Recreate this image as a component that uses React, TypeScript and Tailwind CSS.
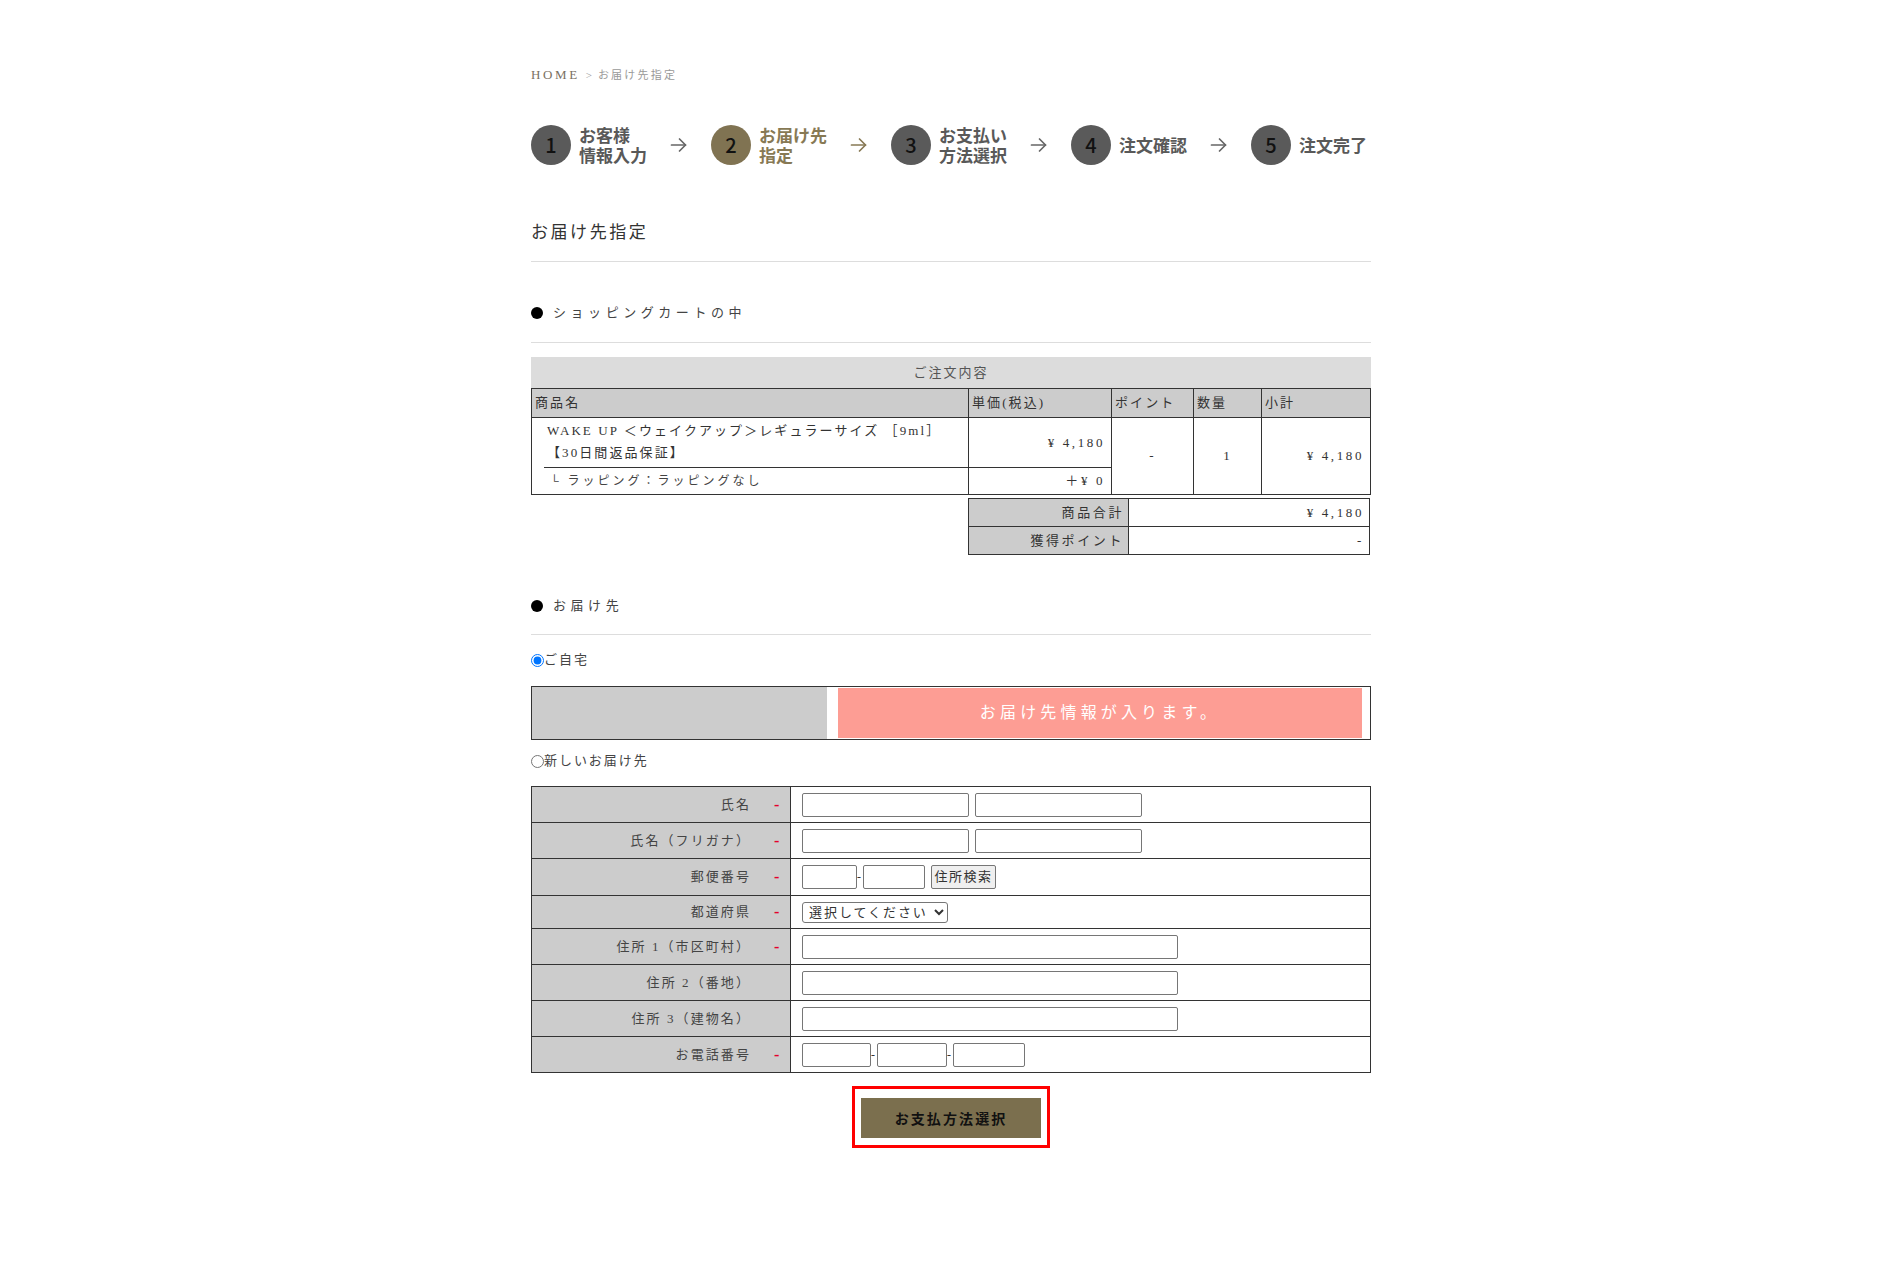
import type { ReactNode } from 'react';

const serif = "font-['Liberation_Serif','Noto_Sans_CJK_JP',serif]";
const sans = "font-['Noto_Sans_CJK_JP','Noto_Sans',sans-serif]";

type Step = Readonly<{ n: number; lines: string[]; active?: boolean }>;

const steps: Step[] = [
  { n: 1, lines: ['お客様', '情報入力'] },
  { n: 2, lines: ['お届け先', '指定'], active: true },
  { n: 3, lines: ['お支払い', '方法選択'] },
  { n: 4, lines: ['注文確認'] },
  { n: 5, lines: ['注文完了'] },
];

const Arrow = ({ color }: { color: string }) => (
  <svg width="17" height="16" viewBox="0 0 17 16" fill="none" stroke={color} strokeWidth="1.7" strokeLinecap="round" strokeLinejoin="round">
    <path d="M1.5 8h14" />
    <path d="M9.5 2l6 6-6 6" />
  </svg>
);

const StepBar = () => (
  <div className={`mt-[40px] grid grid-cols-[180px_180px_180px_180px_1fr] ${sans}`}>
    {steps.map((s, i) => (
      <div key={s.n} className="flex items-center">
        <div className="flex items-center gap-[8px]">
          <span
            className={
              s.active
                ? 'flex h-10 w-10 shrink-0 items-center justify-center rounded-full bg-[#807352] text-[20px] font-medium text-[#111]'
                : 'flex h-10 w-10 shrink-0 items-center justify-center rounded-full bg-[#5a5a5a] text-[20px] font-medium text-[#111]'
            }
          >
            {s.n}
          </span>
          <div
            className={
              s.active
                ? 'text-[17px] font-bold leading-[20px] whitespace-nowrap text-[#877954]'
                : 'text-[17px] font-bold leading-[20px] whitespace-nowrap text-[#595959]'
            }
          >
            {s.lines.map((l) => (
              <div key={l}>{l}</div>
            ))}
          </div>
        </div>
        {i < steps.length - 1 && (
          <div className="mr-[24px] ml-auto flex">
            <Arrow color={s.active ? '#877954' : '#666666'} />
          </div>
        )}
      </div>
    ))}
  </div>
);

const SectionHeading = ({ children, className }: { children: ReactNode; className: string }) => (
  <div className={`flex items-center border-b border-[#dddddd] leading-[20px] ${className}`}>
    <span className="inline-block h-[12px] w-[12px] rounded-full bg-black" />
    <span className="ml-[10px] text-[13px] tracking-[0.35em] text-[#444]">{children}</span>
  </div>
);

const OrderTable = () => (
  <>
    <div className="mt-[14px] flex h-[31px] items-center justify-center bg-[#dcdcdc] text-[13px] tracking-[0.15em] text-[#555]">
      ご注文内容
    </div>
    <table className="w-full table-fixed border-collapse text-[13px] tracking-[0.16em] text-[#333]">
      <colgroup>
        <col className="w-[437px]" />
        <col className="w-[143px]" />
        <col className="w-[82px]" />
        <col className="w-[68px]" />
        <col />
      </colgroup>
      <thead>
        <tr className="h-[29px] bg-[#cccccc]">
          <th className="border border-[#333] px-[3px] text-left font-normal">商品名</th>
          <th className="border border-[#333] px-[3px] text-left font-normal">単価(税込)</th>
          <th className="border border-[#333] px-[3px] text-left font-normal">ポイント</th>
          <th className="border border-[#333] px-[3px] text-left font-normal">数量</th>
          <th className="border border-[#333] px-[3px] text-left font-normal">小計</th>
        </tr>
      </thead>
      <tbody>
        <tr className="h-[49px]">
          <td className="border-l border-[#333] pt-[2px] pb-[3px] pl-[15px] align-top leading-[22px]">
            <div className="whitespace-nowrap">WAKE UP ＜ウェイクアップ＞レギュラーサイズ ［9ml］</div>
            <div>【30日間返品保証】</div>
          </td>
          <td className="border border-[#333] pr-[6px] text-right align-middle tracking-[0.2em]">¥ 4,180</td>
          <td rowSpan={2} className="border border-[#333] text-center align-middle">-</td>
          <td rowSpan={2} className="border border-[#333] text-center align-middle">1</td>
          <td rowSpan={2} className="border border-[#333] pr-[6px] text-right align-middle tracking-[0.2em]">
            ¥ 4,180
          </td>
        </tr>
        <tr className="h-[27px]">
          <td className="border-b border-l border-[#333] p-0 pl-[12px]">
            <div className="flex h-[27px] items-center border-t border-[#333] pl-[6px] text-[12px] tracking-[0.25em] text-[#444]">
              └ ラッピング：ラッピングなし
            </div>
          </td>
          <td className="border border-[#333] pr-[6px] text-right align-middle tracking-[0.2em]">＋¥ 0</td>
        </tr>
      </tbody>
    </table>
    <table className="mt-[3px] mr-[1px] ml-auto w-[402px] table-fixed border-collapse text-[13px] tracking-[0.2em] text-[#333]">
      <colgroup>
        <col className="w-[160px]" />
        <col />
      </colgroup>
      <tbody>
        <tr className="h-[28px]">
          <th className="border border-[#333] bg-[#cccccc] pr-[4px] text-right font-normal">商品合計</th>
          <td className="border border-[#333] pr-[5px] text-right">¥ 4,180</td>
        </tr>
        <tr className="h-[28px]">
          <th className="border border-[#333] bg-[#cccccc] pr-[4px] text-right font-normal">獲得ポイント</th>
          <td className="border border-[#333] pr-[5px] text-right">-</td>
        </tr>
      </tbody>
    </table>
  </>
);

const inputCls = 'h-[24px] rounded-[2px] border border-[#767676] bg-white';
const Dash = () => <span className="w-[6px] text-center text-[12px] leading-none text-[#333]">-</span>;

type Row = Readonly<{ label: string; req: boolean; kind: 'name' | 'zip' | 'pref' | 'addr' | 'tel'; h: string }>;

const rows: Row[] = [
  { label: '氏名', req: true, kind: 'name', h: 'h-[36px]' },
  { label: '氏名（フリガナ）', req: true, kind: 'name', h: 'h-[36px]' },
  { label: '郵便番号', req: true, kind: 'zip', h: 'h-[37px]' },
  { label: '都道府県', req: true, kind: 'pref', h: 'h-[33px]' },
  { label: '住所 1（市区町村）', req: true, kind: 'addr', h: 'h-[36px]' },
  { label: '住所 2（番地）', req: false, kind: 'addr', h: 'h-[36px]' },
  { label: '住所 3（建物名）', req: false, kind: 'addr', h: 'h-[36px]' },
  { label: 'お電話番号', req: true, kind: 'tel', h: 'h-[36px]' },
];

const Field = ({ kind }: { kind: Row['kind'] }) => {
  if (kind === 'name')
    return (
      <div className="flex items-center gap-[6px]">
        <input className={`${inputCls} w-[167px]`} />
        <input className={`${inputCls} w-[167px]`} />
      </div>
    );
  if (kind === 'zip')
    return (
      <div className="flex items-center">
        <input className={`${inputCls} w-[55px]`} />
        <Dash />
        <input className={`${inputCls} w-[62px]`} />
        <button className="ml-[6px] h-[24px] w-[65px] rounded-[2px] border border-[#767676] bg-[#efefef] text-[13px] tracking-[0.12em] text-[#333]">
          住所検索
        </button>
      </div>
    );
  if (kind === 'pref')
    return (
      <select className="h-[21px] w-[146px] rounded-[3px] border border-[#767676] bg-white pl-[2px] text-[13px] tracking-[0.15em] text-[#333]">
        <option>選択してください</option>
      </select>
    );
  if (kind === 'addr') return <input className={`${inputCls} w-[376px]`} />;
  return (
    <div className="flex items-center">
      <input className={`${inputCls} w-[69px]`} />
      <Dash />
      <input className={`${inputCls} w-[70px]`} />
      <Dash />
      <input className={`${inputCls} w-[72px]`} />
    </div>
  );
};

const AddressForm = () => (
  <table className="mt-[15px] w-full table-fixed border-collapse text-[13px] tracking-[0.16em] text-[#444]">
    <colgroup>
      <col className="w-[259px]" />
      <col />
    </colgroup>
    <tbody>
      {rows.map((r) => (
        <tr key={r.label} className={r.h}>
          <th className="border border-[#333] bg-[#cccccc] p-0 font-normal">
            <div className="flex items-center justify-end pr-[10px]">
              <span>{r.label}</span>
              <span className="ml-[23px] w-[6px] text-center text-[16px] leading-none font-bold text-[#e4002b]">
                {r.req ? '-' : ''}
              </span>
            </div>
          </th>
          <td className="border border-[#333] py-0 pl-[11px]">
            <Field kind={r.kind} />
          </td>
        </tr>
      ))}
    </tbody>
  </table>
);

export default function App() {
  return (
    <div className={`min-h-screen bg-white ${serif}`}>
      <div className="flex justify-center pl-[10px]">
        <main className="w-[840px] pt-[65px] pb-[100px]">
          <div className="flex items-center leading-[20px]">
            <span className="text-[13px] tracking-[0.2em] text-[#7a7062]">HOME</span>
            <span className="mx-[6px] text-[11px] text-[#999]">&gt;</span>
            <span className="text-[11px] tracking-[0.2em] text-[#999]">お届け先指定</span>
          </div>

          <StepBar />

          <h1 className="mt-[56px] border-b border-[#dddddd] pb-[16px] text-[17px] leading-[24px] font-normal tracking-[0.15em] text-[#333]">
            お届け先指定
          </h1>

          <SectionHeading className="mt-[41px] pb-[19px]">ショッピングカートの中</SectionHeading>

          <OrderTable />

          <SectionHeading className="mt-[41px] pb-[18px]">お届け先</SectionHeading>

          <label className="mt-[15px] flex items-center text-[13px] leading-[20px] tracking-[0.15em] text-[#444]">
            <input type="radio" name="dest" defaultChecked className="m-0 h-[13px] w-[13px]" />
            <span>ご自宅</span>
          </label>

          <div className="mt-[16px] flex h-[54px] border border-[#333]">
            <div className="w-[295px] bg-[#cccccc]" />
            <div className="flex flex-1 py-[1px] pr-[8px] pl-[11px]">
              <div className="flex flex-1 items-center justify-center bg-[#fd9d94] text-[16px] tracking-[0.26em] text-white">
                お届け先情報が入ります。
              </div>
            </div>
          </div>

          <label className="mt-[11px] flex items-center text-[13px] leading-[20px] tracking-[0.15em] text-[#444]">
            <input type="radio" name="dest" className="m-0 h-[13px] w-[13px]" />
            <span>新しいお届け先</span>
          </label>

          <AddressForm />

          <div className="mt-[13px] flex justify-center">
            <div className="border-[3px] border-[#ff0000] px-[6px] pt-[9px] pb-[7px]">
              <button
                className={`h-[40px] w-[180px] bg-[#7b6f4e] text-[14px] font-bold tracking-[0.15em] text-[#111] ${sans}`}
              >
                お支払方法選択
              </button>
            </div>
          </div>
        </main>
      </div>
    </div>
  );
}
